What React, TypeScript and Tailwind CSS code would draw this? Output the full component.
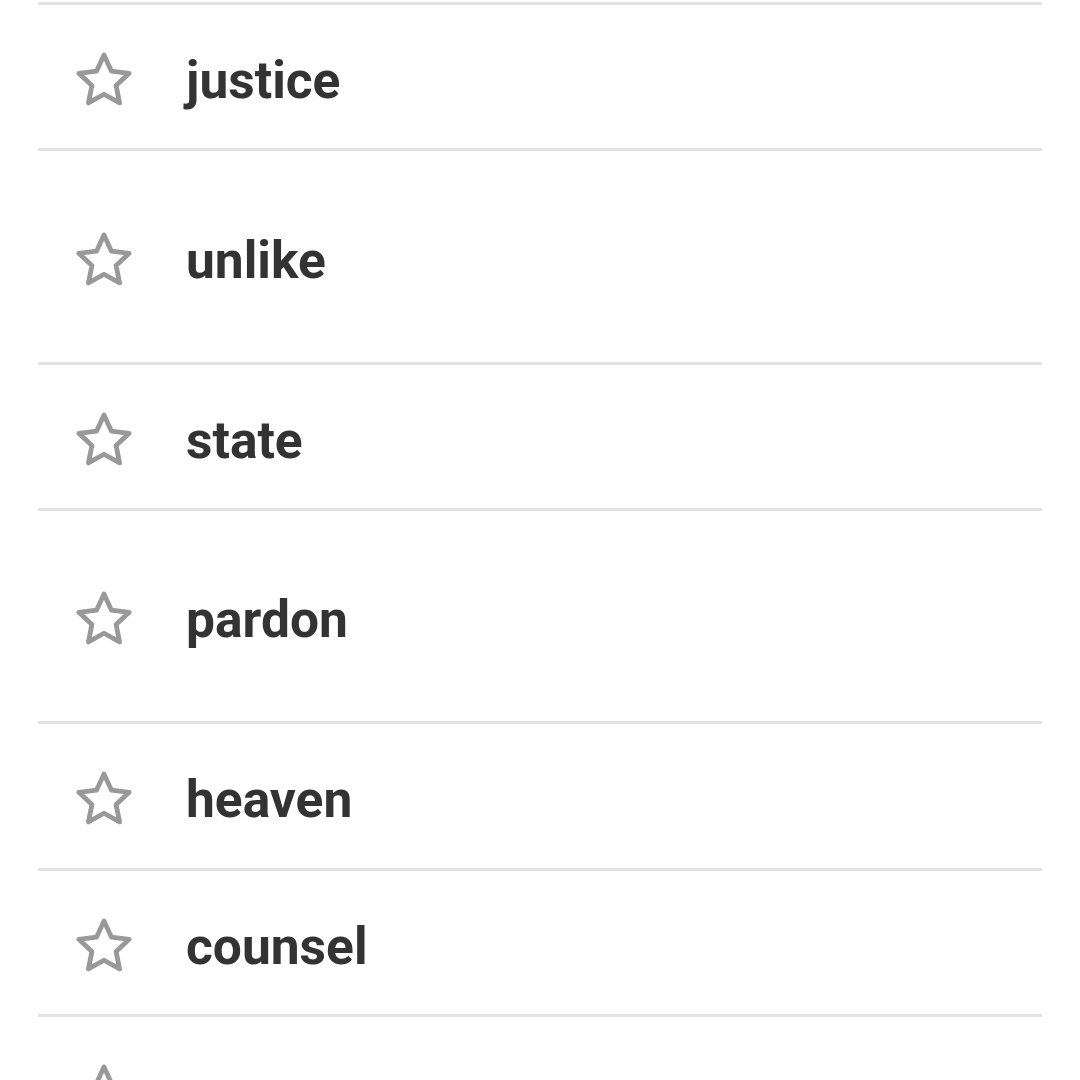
import React from 'react';

type Word = { text: string; h: number };

const words: Word[] = [
  { text: 'justice', h: 146 },
  { text: 'unlike', h: 214 },
  { text: 'state', h: 146 },
  { text: 'pardon', h: 213 },
  { text: 'heaven', h: 147 },
  { text: 'counsel', h: 146 },
  { text: '', h: 146 },
];

const heightClass: Record<number, string> = {
  146: 'h-[146px]',
  147: 'h-[147px]',
  213: 'h-[213px]',
  214: 'h-[214px]',
};

function starPoints(cx: number, cy: number, r: number, ratio: number) {
  const pts: string[] = [];
  for (let i = 0; i < 10; i++) {
    const rad = i % 2 === 0 ? r : r * ratio;
    const a = (Math.PI / 5) * i - Math.PI / 2;
    pts.push(`${(cx + rad * Math.cos(a)).toFixed(2)},${(cy + rad * Math.sin(a)).toFixed(2)}`);
  }
  return pts.join(' ');
}

const StarOutline: React.FC = () => (
  <svg width="60" height="60" viewBox="0 0 60 60" className="shrink-0 translate-y-[1px]">
    <polygon
      points={starPoints(30, 33.5, 26.5, 0.48)}
      fill="none"
      stroke="#999999"
      strokeWidth="4.8"
      strokeLinejoin="round"
    />
  </svg>
);

export default function App() {
  return (
    <div className="h-[1080px] w-[1080px] overflow-hidden bg-white" style={{ fontFamily: 'Roboto, "Noto Sans", sans-serif' }}>
      <div className="ml-[38px] mr-[38px] mt-[2px] border-t-[3px] border-[#e3e3e3]">
        {words.map((w, i) => (
          <div key={i} className={`${heightClass[w.h]} flex items-center border-b-[3px] border-[#e3e3e3]`}>
            <div className="ml-[36px] flex items-center">
              <StarOutline />
            </div>
            <span className="ml-[52px] translate-y-[4px] text-[51.5px] font-bold leading-none text-[#333333]">{w.text}</span>
          </div>
        ))}
      </div>
    </div>
  );
}
